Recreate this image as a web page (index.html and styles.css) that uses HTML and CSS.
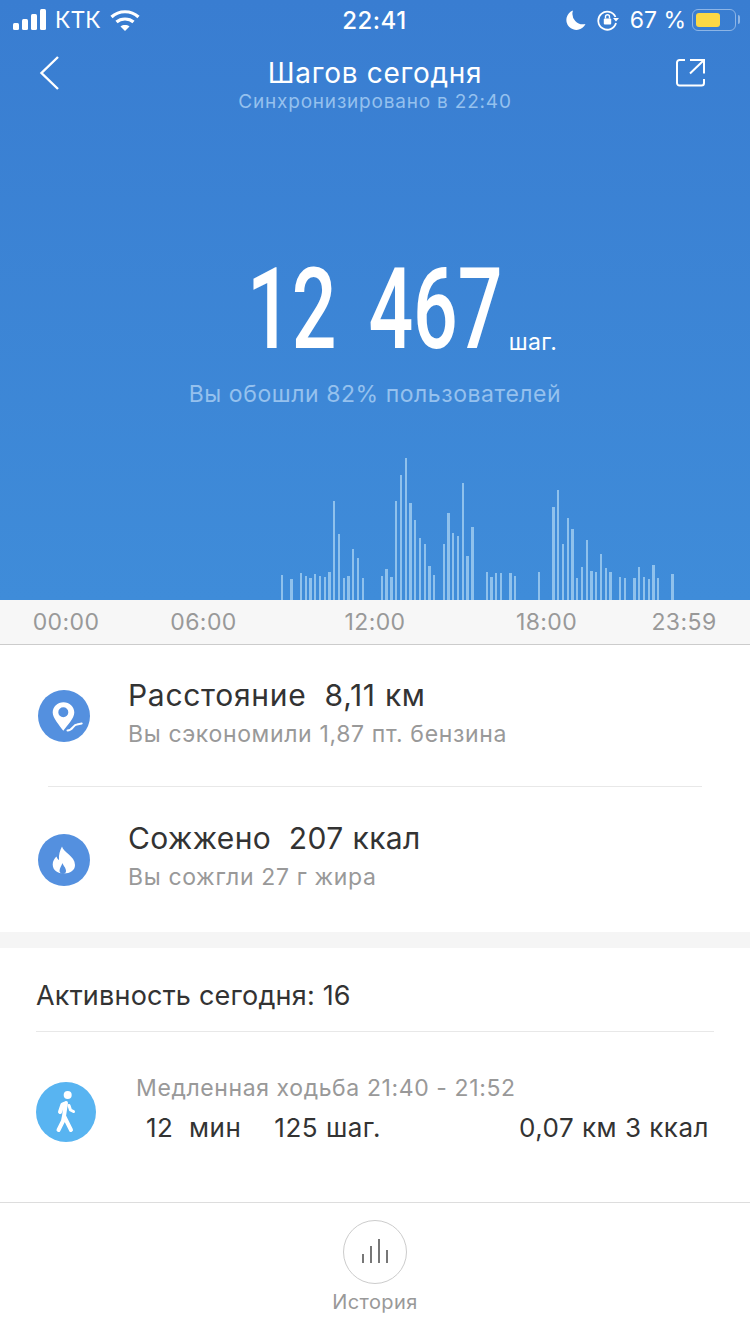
FILE: index.html
```html
<!DOCTYPE html>
<html lang="ru">
<head>
  <meta charset="UTF-8" />
  <meta name="viewport" content="width=device-width, initial-scale=1.0"/>
  <title>Шагов сегодня</title>
  <link rel="stylesheet" href="styles.css">
</head>
<body>
  <section class="hero">
    <div class="status-bar">
      <div class="status-left">
        <svg class="signal" width="36" height="22" viewBox="0 0 36 22" fill="#fff">
          <rect x="0" y="14" width="6" height="7" rx="1.5"/>
          <rect x="9" y="10" width="6" height="11" rx="1.5"/>
          <rect x="18" y="5" width="6" height="16" rx="1.5"/>
          <rect x="27" y="0" width="6" height="21" rx="1.5"/>
        </svg>
        <span>КТК</span>
        <svg class="wifi" width="30" height="23" viewBox="0 0 30 23" fill="none" stroke="#fff" stroke-width="3.2">
          <path d="M1.5 8 C9 1 21 1 28.5 8"/>
          <path d="M6.5 13 C11 9 19 9 23.5 13"/>
          <path d="M15 22 L10.5 17.5 C13 15.6 17 15.6 19.5 17.5 Z" fill="#fff" stroke="none"/>
        </svg>
      </div>
      <div class="status-time">22:41</div>
      <div class="status-right">
        <svg width="20" height="22" viewBox="0 0 20 22" fill="#fff">
          <path d="M7 1.5 A10 10 0 1 0 19.5 15 A10.5 10.5 0 0 1 7 1.5 Z"/>
        </svg>
        <svg class="rot-lock" width="22" height="22" viewBox="0 0 22 22" fill="none" stroke="#fff" stroke-width="1.8">
          <path d="M18.5 8 A9 9 0 1 0 19 14"/>
          <path d="M16 9 L22 9 L19 12.5 Z" fill="#fff" stroke="none"/>
          <rect x="6.8" y="9.5" width="7.4" height="6" rx="1" fill="#fff" stroke="none"/>
          <path d="M8.5 9.5 V7.8 A2 2 0 0 1 12.5 7.8 V9.5" stroke-width="1.4"/>
        </svg>
        <span class="battery-pct">67 %</span>
        <div class="battery"><div class="battery-fill"></div></div>
      </div>
    </div>

    <header class="top-nav">
      <svg class="nav-icon" width="22" height="36" viewBox="0 0 22 36" fill="none" stroke="#fff" stroke-width="2.4">
        <path d="M19 2 L2.5 18 L19 34"/>
      </svg>
      <div class="nav-title">
        <h1>Шагов сегодня</h1>
        <p>Синхронизировано в 22:40</p>
      </div>
      <svg class="nav-icon" width="30" height="30" viewBox="0 0 30 30" fill="none" stroke="#fff" stroke-width="2">
        <path d="M9 2 H3.500 A2.500 2.500 0 0 0 1 4.500 V25 A2.500 2.500 0 0 0 3.500 27.500 H25.500 A2.500 2.500 0 0 0 28 25 V21"/>
        <path d="M14 15.500 L27.500 2.500"/>
        <path d="M14 2 H28 V15.500"/>
      </svg>
    </header>

    <div class="steps">
      <span class="steps-num">12 467</span>
      <span class="steps-unit">шаг.</span>
    </div>
    <p class="steps-note">Вы обошли 82% пользователей</p>

    <svg class="chart" width="750" height="142" viewBox="0 458 750 142" fill="#8fc1ec">
      <rect x="281" y="575" width="2" height="25"/><rect x="290" y="579" width="3" height="21"/>
      <rect x="300" y="573" width="2" height="27"/><rect x="305" y="576" width="2" height="24"/>
      <rect x="309" y="578" width="3" height="22"/><rect x="314" y="574" width="2" height="26"/>
      <rect x="319" y="576" width="2" height="24"/><rect x="324" y="577" width="2" height="23"/>
      <rect x="328" y="572" width="3" height="28"/><rect x="333" y="501" width="2" height="99"/>
      <rect x="338" y="534" width="2" height="66"/><rect x="343" y="578" width="2" height="22"/>
      <rect x="347" y="576" width="3" height="24"/><rect x="352" y="549" width="2" height="51"/>
      <rect x="357" y="558" width="2" height="42"/><rect x="362" y="578" width="2" height="22"/>
      <rect x="381" y="576" width="2" height="24"/><rect x="385" y="569" width="3" height="31"/>
      <rect x="390" y="577" width="3" height="23"/><rect x="395" y="501" width="2" height="99"/>
      <rect x="400" y="475" width="2" height="125"/><rect x="405" y="458" width="2" height="142"/>
      <rect x="409" y="503" width="3" height="97"/><rect x="414" y="520" width="2" height="80"/>
      <rect x="419" y="538" width="2" height="62"/><rect x="424" y="544" width="2" height="56"/>
      <rect x="428" y="566" width="3" height="34"/><rect x="433" y="575" width="2" height="25"/>
      <rect x="443" y="544" width="2" height="56"/><rect x="447" y="513" width="3" height="87"/>
      <rect x="452" y="533" width="2" height="67"/><rect x="457" y="536" width="2" height="64"/>
      <rect x="462" y="483" width="2" height="117"/><rect x="466" y="556" width="3" height="44"/>
      <rect x="471" y="527" width="3" height="73"/><rect x="486" y="572" width="2" height="28"/>
      <rect x="490" y="577" width="3" height="23"/><rect x="495" y="573" width="2" height="27"/>
      <rect x="500" y="573" width="2" height="27"/><rect x="509" y="573" width="3" height="27"/>
      <rect x="514" y="576" width="2" height="24"/><rect x="538" y="572" width="2" height="28"/>
      <rect x="552" y="507" width="3" height="93"/><rect x="557" y="490" width="2" height="110"/>
      <rect x="562" y="544" width="2" height="56"/><rect x="567" y="518" width="2" height="82"/>
      <rect x="571" y="529" width="3" height="71"/><rect x="576" y="578" width="2" height="22"/>
      <rect x="581" y="567" width="2" height="33"/><rect x="586" y="540" width="2" height="60"/>
      <rect x="590" y="571" width="3" height="29"/><rect x="595" y="572" width="2" height="28"/>
      <rect x="600" y="554" width="2" height="46"/><rect x="605" y="568" width="2" height="32"/>
      <rect x="609" y="572" width="3" height="28"/><rect x="619" y="577" width="2" height="23"/>
      <rect x="624" y="578" width="2" height="22"/><rect x="633" y="578" width="3" height="22"/>
      <rect x="638" y="567" width="2" height="33"/><rect x="643" y="577" width="2" height="23"/>
      <rect x="648" y="579" width="2" height="21"/><rect x="652" y="565" width="3" height="35"/>
      <rect x="657" y="578" width="2" height="22"/><rect x="671" y="574" width="3" height="26"/>
    </svg>
  </section>

  <div class="axis">
    <span>00:00</span>
    <span>06:00</span>
    <span>12:00</span>
    <span>18:00</span>
    <span>23:59</span>
  </div>

  <section class="stats">
    <div class="stat-row">
      <svg class="stat-icon" width="52" height="52" viewBox="0 0 52 52">
        <circle cx="26" cy="26" r="26" fill="#5490df"/>
        <path fill-rule="evenodd" fill="#fff" d="M25.500 12.300 C19.500 12.300 14.700 17 14.700 22.500 C14.700 28 21.500 35.500 25.300 40.700 C29 35.500 36.300 28.500 36.300 22.500 C36.300 17 31.500 12.300 25.500 12.300 Z M25.300 17.300 A5 5 0 1 1 25.300 27.300 A5 5 0 1 1 25.300 17.300 Z"/>
        <path fill="none" stroke="#fff" stroke-width="2" stroke-linecap="round" d="M29.500 40.500 C35 40.500 35 34.500 39 34.500 L43.700 33.500"/>
      </svg>
      <div class="stat-text">
        <h2>Расстояние&nbsp; 8,11 км</h2>
        <p>Вы сэкономили 1,87 пт. бензина</p>
      </div>
    </div>
    <div class="stat-line"></div>
    <div class="stat-row stat-row-second">
      <svg class="stat-icon" width="52" height="52" viewBox="0 0 52 52">
        <circle cx="26" cy="26" r="26" fill="#5490df"/>
        <path fill="#fff" d="M24 12.500 C25 18 37 22 37 31 C37 36.500 32 39.500 26 39.500 C20 39.500 14.700 36.500 14.700 30.500 C14.700 27 16.500 24.500 18.500 22.500 C19 24.500 20 25.500 21 26 C20.500 21 22 16 24 12.500 Z"/>
        <path fill="#5490df" d="M24.500 29 C25 31.500 28 33.500 28 37 C28 38.500 27 40 25 40 C23 40 21.500 38.500 21.500 37 C21.500 34 23.500 32 24.500 29 Z"/>
      </svg>
      <div class="stat-text">
        <h2>Сожжено&nbsp; 207 ккал</h2>
        <p>Вы сожгли 27 г жира</p>
      </div>
    </div>
  </section>

  <div class="band"></div>

  <section class="activity">
    <h3 class="activity-head">Активность сегодня: 16</h3>
    <div class="activity-row">
      <svg class="activity-icon" width="60" height="60" viewBox="0 0 60 60">
        <circle cx="30" cy="30" r="30" fill="#58b4f1"/>
        <circle cx="31.700" cy="13" r="4" fill="#fff"/>
        <path fill="none" stroke="#fff" stroke-width="4" stroke-linecap="round" stroke-linejoin="round" d="M30 21 L26.500 22.500 L24 30 M30 21 L28 34 L35 48 M28 34 L27 39 L22.500 48"/>
        <path fill="none" stroke="#fff" stroke-width="3" stroke-linecap="round" stroke-linejoin="round" d="M33 23.500 L34.500 28 L37.500 29.500"/>
      </svg>
      <div class="activity-text">
        <p class="activity-time">Медленная ходьба 21:40 - 21:52</p>
        <div class="activity-data">
          <span class="data-min">12&nbsp; мин</span>
          <span class="data-steps">125 шаг.</span>
          <span class="data-rest">0,07 км 3 ккал</span>
        </div>
      </div>
    </div>
  </section>

  <footer class="bottom">
    <div class="history-btn">
      <svg width="30" height="26" viewBox="0 0 30 26" stroke="#777" stroke-width="2">
        <path d="M3 15 V24 M11 7 V24 M19 0 V24 M27 11 V24"/>
      </svg>
    </div>
    <span>История</span>
  </footer>
</body>
</html>
```

FILE: styles.css
```css
body {
  font-family: Inter, Roboto, sans-serif;
  margin: 0;
  width: 750px;
  height: 1334px;
  overflow: hidden;
  background: #fff;
  color: #333;
}

h1, h2, h3, p {
  margin: 0;
  font-weight: 400;
}

.hero {
  height: 600px;
  background: linear-gradient(#397dd1, #3f8cd9);
  color: #fff;
  display: flex;
  flex-direction: column;
}

.status-bar {
  height: 40px;
  padding: 0 14px 0 13px;
  display: grid;
  grid-template-columns: 1fr auto 1fr;
  align-items: center;
  font-size: 23px;
}

.status-left {
  display: flex;
  align-items: center;
  gap: 6px;
}

.wifi {
  margin-left: 3px;
}

.status-time {
  font-size: 24px;
  font-weight: 500;
  letter-spacing: 0.5px;
}

.status-right {
  display: flex;
  justify-content: flex-end;
  align-items: center;
  gap: 11px;
}

.battery-pct {
  font-size: 23px;
}

.battery {
  width: 44px;
  height: 22px;
  margin-left: -5px;
  padding: 3px;
  box-sizing: border-box;
  border: 1.5px solid #8db5e6;
  border-radius: 6px;
  position: relative;
}

.battery::after {
  content: "";
  position: absolute;
  right: -5px;
  top: 5px;
  width: 2px;
  height: 9px;
  background: #8db5e6;
  border-radius: 0 2px 2px 0;
}

.battery-fill {
  width: 24px;
  height: 100%;
  background: #fbd844;
  border-radius: 3px;
}

.top-nav {
  height: 66px;
  padding: 0 44px 0 39px;
  display: flex;
  justify-content: space-between;
  align-items: center;
}

.nav-title {
  text-align: center;
  margin: -24px 0 0 13px;
  padding-top: 48px;
}

.nav-title h1 {
  font-size: 28px;
  line-height: 34px;
  letter-spacing: 0.7px;
}

.nav-title p {
  font-size: 19px;
  line-height: 24px;
  letter-spacing: 0.8px;
  color: #95c1ee;
}

.steps {
  margin-top: 150px;
  height: 100px;
  padding-left: 54px;
  display: flex;
  justify-content: center;
  align-items: flex-end;
}

.steps-num {
  width: 252px;
  font-family: Roboto, sans-serif;
  font-size: 114px;
  line-height: 100px;
  font-weight: 500;
  word-spacing: 18px;
  white-space: nowrap;
  transform: scaleX(0.69);
  transform-origin: left;
  margin-bottom: -3px;
}

.steps-unit {
  font-size: 23px;
  line-height: 28px;
  margin-left: 10px;
  letter-spacing: 0.4px;
}

.steps-note {
  margin-top: 24px;
  text-align: center;
  font-size: 23px;
  line-height: 28px;
  letter-spacing: 0.55px;
  color: #95c1ee;
}

.chart {
  display: block;
  margin-top: auto;
}

.axis {
  height: 44px;
  background: #f7f7f7;
  border-bottom: 1px solid #ccc;
  display: grid;
  grid-template-columns: 132px 143px 200px 143px 132px;
  justify-items: center;
  align-items: center;
  font-size: 23px;
  letter-spacing: 0.4px;
  color: #999;
}

.stat-row {
  height: 141px;
  padding-left: 38px;
  display: flex;
  align-items: center;
  gap: 38px;
}

.stat-row-second {
  height: 145px;
}

.stat-text {
  margin-bottom: 7px;
}

.stat-row-second .stat-text {
  margin-bottom: 9px;
}

.stat-text h2 {
  font-size: 30px;
  line-height: 38px;
  letter-spacing: 0.7px;
}

.stat-row-second .stat-text h2 {
  letter-spacing: 0.4px;
}

.stat-text p {
  margin-top: 6px;
  font-size: 23px;
  line-height: 28px;
  letter-spacing: 0.65px;
  color: #999;
}

.stat-line {
  height: 1px;
  margin: 0 48px;
  background: #e8e8e8;
}

.band {
  height: 16px;
  background: #f5f5f5;
}

.activity {
  height: 254px;
  padding: 0 36px;
}

.activity-head {
  height: 84px;
  line-height: 96px;
  font-size: 27px;
  letter-spacing: 0.2px;
  box-sizing: border-box;
  border-bottom: 1px solid #e8e8e8;
}

.activity-row {
  display: flex;
  align-items: center;
  gap: 40px;
  height: 160px;
}

.activity-text {
  flex: 1;
  margin-bottom: 8px;
}

.activity-time {
  font-size: 23px;
  line-height: 30px;
  letter-spacing: 0.6px;
  color: #999;
}

.activity-data {
  display: flex;
  margin-top: 9px;
  padding-left: 10px;
  font-size: 26px;
  line-height: 32px;
  letter-spacing: 0.5px;
}

.data-steps {
  margin-left: 33px;
}

.data-rest {
  margin-left: auto;
  margin-right: 5px;
}

.bottom {
  height: 132px;
  border-top: 1px solid #ddd;
  box-sizing: border-box;
  display: flex;
  flex-direction: column;
  align-items: center;
  padding-top: 17px;
  font-size: 20px;
  letter-spacing: 0.4px;
  color: #999;
}

.history-btn {
  width: 64px;
  height: 64px;
  box-sizing: border-box;
  border: 1px solid #ccc;
  border-radius: 50%;
  display: flex;
  align-items: center;
  justify-content: center;
  margin-bottom: 6px;
}
```
